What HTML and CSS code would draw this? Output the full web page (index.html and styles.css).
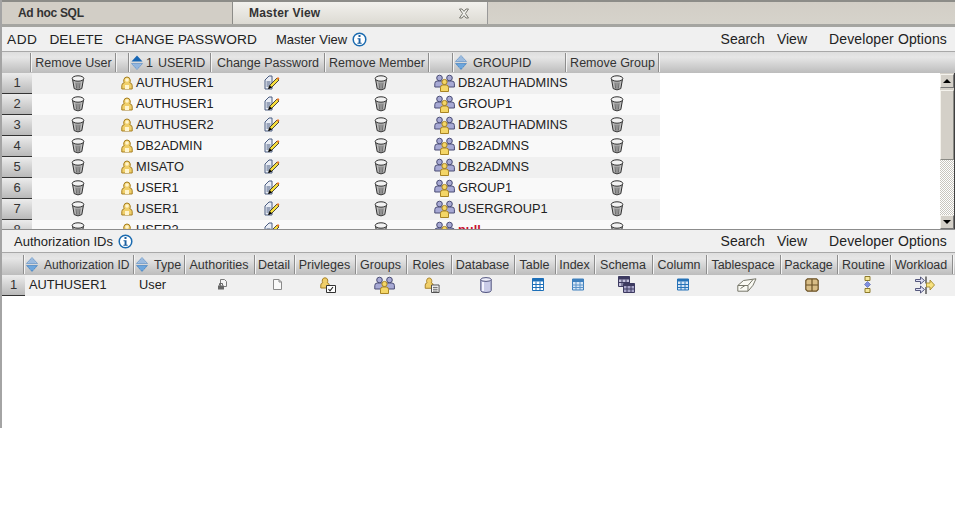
FILE: index.html
```html
<!DOCTYPE html>
<html lang="en">
<head>
<meta charset="utf-8">
<title>Master View</title>
<link rel="stylesheet" href="styles.css">
</head>
<body>
<svg class="sprite" aria-hidden="true">
  <symbol id="i-info" viewBox="0 0 15 15"><circle cx="7.5" cy="7.5" r="6.3" fill="#fff" stroke="#1b6bb0" stroke-width="1.5"/><rect x="6.5" y="3" width="2" height="2" fill="#1b5fa0"/><path d="M5.5 6.2h3v4.6h1.2v1H5.4v-1h1.2V7.2H5.5z" fill="#1b5fa0"/></symbol>
  <symbol id="i-sort" viewBox="0 0 12 15"><path d="M6 .5 11.500 6.500H.5z" fill="#b7cfea" stroke="#5e8fc4" stroke-width=".7"/><path d="M2.500 5h7M4 3h4" stroke="#5e8fc4" stroke-width=".6"/><path d="M6 14.500.5 8.500h11z" fill="#4f93d6" stroke="#3a78b8" stroke-width=".5"/><path d="M2.500 10h7M4 12h4" stroke="#b7d3ef" stroke-width=".6"/></symbol>
  <symbol id="i-sort-on" viewBox="0 0 12 15"><path d="M6 .5 11.500 6.500H.5z" fill="#1766b4"/><path d="M6 14.500.5 8.500h11z" fill="#a9c7ea" stroke="#5e8fc4" stroke-width=".7"/><path d="M2.500 10h7M4 12h4" stroke="#5e8fc4" stroke-width=".6"/></symbol>
  <symbol id="i-close" viewBox="0 0 12 11"><path d="M1.5 1H4L6 3.4 8 1h2.500L7.400 5.500l3.100 4.500H8L6 7.600 4 10H1.500l3.100-4.500z" fill="#f4f4f0" stroke="#77776f"/></symbol>
  <symbol id="i-trash" viewBox="0 0 14 16"><path d="M1.500 4 3.200 13.600Q7 16.200 10.800 13.600L12.500 4z" fill="#bdbdbd" stroke="#2e2e2e"/><ellipse cx="7" cy="3.500" rx="5.800" ry="2.700" fill="#f2f2f2" stroke="#2e2e2e"/><path d="M5 7.500l.5 6M9 7.500l-.5 6M7 7.500v7" stroke="#666"/></symbol>
  <symbol id="i-user" viewBox="0 0 12 14"><path d="M.8 13V9.500Q.8 7.200 3.200 6.800 2.500 5.600 2.800 3.800 3.300 1 6 1t3.200 2.800Q9.500 5.600 8.800 6.800 11.200 7.200 11.200 9.500V13z" fill="#f0cf6a" stroke="#a67f22"/><circle cx="6" cy="4" r="1.800" fill="#fff5cf"/><path d="M4 13V9h4v4z" fill="#fff5cf"/></symbol>
  <symbol id="i-edit" viewBox="0 0 16 15"><path d="M1 5 5 1h3v13H1z" fill="#e9edf5" stroke="#4a5c80"/><path d="M2.500 7H6.500M2.500 9H6.500M2.500 11H6.500" stroke="#4a5c80"/><path d="M4.500 13.500 6 10 13 3l2 2-7 7z" fill="#f7de3a" stroke="#222" stroke-width=".8"/><path d="M4.300 14 5.800 10.500 8 12.500z" fill="#000"/><path d="M12.500 3.500 14 2l1.500 1.500L14 5z" fill="#e8792a"/></symbol>
  <symbol id="i-group" viewBox="0 0 21 18"><g fill="#a7a9d4" stroke="#4a4d75"><circle cx="5.500" cy="4" r="2.800"/><path d="M.8 13V9.500q0-2.500 2.500-2.500h4.400q2.500 0 2.500 2.500V13z"/><circle cx="15.500" cy="4" r="2.800"/><path d="M11 13V9.500q0-2.500 2.500-2.500h4.400q2.500 0 2.500 2.500V13z"/></g><g fill="#f4d667" stroke="#a88425"><circle cx="10.500" cy="8" r="2.600"/><path d="M6.500 17.500v-4q0-2.500 2.300-2.500h3.400q2.300 0 2.300 2.500v4z"/></g></symbol>
  <symbol id="i-auth" viewBox="0 0 10 11"><path d="M3 .5h4l2 2v5H3z" fill="#f4f4f4" stroke="#7a7a7a"/><path d="M.5 6.500h6v4h-6z" fill="#666"/><path d="M2 6.500V4.500h3v2" fill="none" stroke="#666"/></symbol>
  <symbol id="i-doc" viewBox="0 0 10 11"><path d="M1 .5h5.500l2.500 2.500v7.500H1z" fill="#fafafa" stroke="#8a8a8a"/><path d="M6.500.5V3H9" fill="none" stroke="#8a8a8a"/></symbol>
  <symbol id="i-priv" viewBox="0 0 16 16"><path d="M.8 11V8q0-2 2-2.300Q2 4.500 2.300 3 2.800.8 5 .8T7.700 3q.3 1.500-.5 2.700 2 .3 2 2.300v3z" fill="#f0cf6a" stroke="#a67f22"/><path d="M6.500 8.500h9v7h-9z" fill="#fff" stroke="#333"/><path d="M8.500 12l1.500 1.800 3-3.800" fill="none" stroke="#222" stroke-width="1.100"/></symbol>
  <symbol id="i-role" viewBox="0 0 16 17"><path d="M.8 12V8.500q0-2 2-2.300Q2 5 2.300 3.500 2.800 1 5 1t2.700 2.500q.3 1.500-.5 2.700 2 .3 2 2.300V12z" fill="#f0cf6a" stroke="#a67f22"/><path d="M7.500 8.500h8v8h-8z" fill="#fff" stroke="#444"/><path d="M9 11h5M9 13h5M9 15h5" stroke="#555"/></symbol>
  <symbol id="i-db" viewBox="0 0 12 16"><path d="M.8 2.500v11Q.8 15.500 6 15.500t5.200-2v-11z" fill="#c9cbe8" stroke="#52557f"/><ellipse cx="6" cy="2.500" rx="5.200" ry="1.900" fill="#eeeefa" stroke="#52557f"/><path d="M3 5v9" stroke="#f4f4ff" stroke-width="2"/></symbol>
  <symbol id="i-table" viewBox="0 0 12 13"><path d="M.5.500h11v12H.5z" fill="#fff" stroke="#1c6fb8"/><path d="M.5.500h11v3H.5z" fill="#1c6fb8"/><path d="M4 3.500v9M8 3.500v9M.5 6.500h11M.5 9.500h11" stroke="#1c6fb8"/></symbol>
  <symbol id="i-index" viewBox="0 0 12 12"><path d="M.5.500h11v11H.5z" fill="#d6e6f6" stroke="#3f80bd"/><path d="M.5.500h11v3H.5z" fill="#3f80bd"/><path d="M4 3.500v8M8 3.500v8M.5 6.500h11M.5 9h11" stroke="#5c94c9"/></symbol>
  <symbol id="i-schema" viewBox="0 0 17 17"><path d="M.5.500h11v10H.5z" fill="#c4c2dc" stroke="#3d3a60"/><path d="M.5.500h11v3H.5z" fill="#3d3a60"/><path d="M4 3.500v7M8 3.500v7M.5 6.500h11" stroke="#3d3a60"/><path d="M5.500 7.500h11v9h-11z" fill="#a7a4c8" stroke="#3d3a60"/><path d="M5.500 7.500h11v2.500h-11z" fill="#3d3a60"/><path d="M9 10v6.500M13 10v6.500M5.500 13h11" stroke="#3d3a60"/></symbol>
  <symbol id="i-column" viewBox="0 0 12 12"><path d="M.5.500h11v11H.5z" fill="#d6e6f6" stroke="#2673b8"/><path d="M.5.500h11v2.500H.5z" fill="#2673b8"/><path d="M4 3v8.500M8 3v8.500M.5 6h11M.5 9h11" stroke="#2673b8"/></symbol>
  <symbol id="i-space" viewBox="0 0 20 14"><path d="M.8 7.500 6.500 2.500 19 .8l-3 6.500-5 5.900H.8z" fill="#fafaf4" stroke="#77776a"/><path d="M.8 7.500H11L16 1.500M11 7.500v5.700M3.500 10.500 8 7.500" fill="none" stroke="#77776a"/></symbol>
  <symbol id="i-package" viewBox="0 0 14 14"><path d="M.8 2.500 2.500.8h9l1.700 1.700v9l-1.700 1.700h-9L.8 11.500z" fill="#d8bd86" stroke="#6b5226" stroke-width="1.200"/><path d="M7 1v12M1 7h12" stroke="#6b5226" stroke-width="1.200"/></symbol>
  <symbol id="i-routine" viewBox="0 0 7 17"><path d="M1 .5h5v4H1zM1 12.500h5v4H1z" fill="#f5e79a" stroke="#8d7a2b"/><path d="M3.500 5.500 6.500 8.500 3.500 11.500.5 8.500z" fill="#7f8fe0" stroke="#4d5aa5" stroke-width=".6"/></symbol>
  <symbol id="i-work" viewBox="0 0 20 18"><path d="M.5 3.500h5V1l4 3.500-4 3.500V5.500h-5zM.5 12.500h5V10l4 3.500-4 3.500v-2.500h-5z" fill="#dfe0f5" stroke="#44476f" stroke-width=".9"/><path d="M11 .5v7M11 11v7" stroke="#333" stroke-width="1.200"/><path d="M11.500 7h3.500V4l4.500 5-4.500 5v-3h-3.500z" fill="#f7e27f" stroke="#a1882c" stroke-width=".9"/></symbol>
</svg>

<div class="app">
  <div class="tabs">
    <div class="tab">Ad hoc SQL</div>
    <div class="tab tab-active"><span>Master View</span><svg class="ic-close"><use href="#i-close"/></svg></div>
    <div class="tab-rest"></div>
  </div>

  <div class="toolbar toolbar-top">
    <span class="act">ADD</span>
    <span class="act">DELETE</span>
    <span class="act act-wide">CHANGE PASSWORD</span>
    <span class="title">Master View</span>
    <svg class="ic-info"><use href="#i-info"/></svg>
    <div class="tools">
      <span>Search</span><span>View</span><span class="dev">Developer Options</span>
    </div>
  </div>

  <div class="head head-top">
    <div class="hc hc-wide"></div>
    <div class="hc hc-wide">Remove User</div>
    <div class="hc hc-wide"></div>
    <div class="hc hc-sort"><svg class="ic-sort"><use href="#i-sort-on"/></svg><span class="rank">1</span><span>USERID</span></div>
    <div class="hc hc-wide">Change Password</div>
    <div class="hc hc-wide">Remove Member</div>
    <div class="hc hc-wide"></div>
    <div class="hc hc-sort"><svg class="ic-sort"><use href="#i-sort"/></svg><span class="lbl">GROUPID</span></div>
    <div class="hc hc-wide">Remove Group</div>
  </div>

  <div class="list">
    <div class="rows">
      <div class="row"><div class="num">1</div><div class="c-rm"><svg class="ic-trash"><use href="#i-trash"/></svg></div><div class="c-id"><svg class="ic-user"><use href="#i-user"/></svg>AUTHUSER1</div><div class="c-ic"><svg class="ic-edit"><use href="#i-edit"/></svg></div><div class="c-ic"><svg class="ic-trash"><use href="#i-trash"/></svg></div><div class="c-id c-group"><svg class="ic-group"><use href="#i-group"/></svg>DB2AUTHADMINS</div><div class="c-ic"><svg class="ic-trash"><use href="#i-trash"/></svg></div></div>
      <div class="row"><div class="num">2</div><div class="c-rm"><svg class="ic-trash"><use href="#i-trash"/></svg></div><div class="c-id"><svg class="ic-user"><use href="#i-user"/></svg>AUTHUSER1</div><div class="c-ic"><svg class="ic-edit"><use href="#i-edit"/></svg></div><div class="c-ic"><svg class="ic-trash"><use href="#i-trash"/></svg></div><div class="c-id c-group"><svg class="ic-group"><use href="#i-group"/></svg>GROUP1</div><div class="c-ic"><svg class="ic-trash"><use href="#i-trash"/></svg></div></div>
      <div class="row"><div class="num">3</div><div class="c-rm"><svg class="ic-trash"><use href="#i-trash"/></svg></div><div class="c-id"><svg class="ic-user"><use href="#i-user"/></svg>AUTHUSER2</div><div class="c-ic"><svg class="ic-edit"><use href="#i-edit"/></svg></div><div class="c-ic"><svg class="ic-trash"><use href="#i-trash"/></svg></div><div class="c-id c-group"><svg class="ic-group"><use href="#i-group"/></svg>DB2AUTHADMINS</div><div class="c-ic"><svg class="ic-trash"><use href="#i-trash"/></svg></div></div>
      <div class="row"><div class="num">4</div><div class="c-rm"><svg class="ic-trash"><use href="#i-trash"/></svg></div><div class="c-id"><svg class="ic-user"><use href="#i-user"/></svg>DB2ADMIN</div><div class="c-ic"><svg class="ic-edit"><use href="#i-edit"/></svg></div><div class="c-ic"><svg class="ic-trash"><use href="#i-trash"/></svg></div><div class="c-id c-group"><svg class="ic-group"><use href="#i-group"/></svg>DB2ADMNS</div><div class="c-ic"><svg class="ic-trash"><use href="#i-trash"/></svg></div></div>
      <div class="row"><div class="num">5</div><div class="c-rm"><svg class="ic-trash"><use href="#i-trash"/></svg></div><div class="c-id"><svg class="ic-user"><use href="#i-user"/></svg>MISATO</div><div class="c-ic"><svg class="ic-edit"><use href="#i-edit"/></svg></div><div class="c-ic"><svg class="ic-trash"><use href="#i-trash"/></svg></div><div class="c-id c-group"><svg class="ic-group"><use href="#i-group"/></svg>DB2ADMNS</div><div class="c-ic"><svg class="ic-trash"><use href="#i-trash"/></svg></div></div>
      <div class="row"><div class="num">6</div><div class="c-rm"><svg class="ic-trash"><use href="#i-trash"/></svg></div><div class="c-id"><svg class="ic-user"><use href="#i-user"/></svg>USER1</div><div class="c-ic"><svg class="ic-edit"><use href="#i-edit"/></svg></div><div class="c-ic"><svg class="ic-trash"><use href="#i-trash"/></svg></div><div class="c-id c-group"><svg class="ic-group"><use href="#i-group"/></svg>GROUP1</div><div class="c-ic"><svg class="ic-trash"><use href="#i-trash"/></svg></div></div>
      <div class="row"><div class="num">7</div><div class="c-rm"><svg class="ic-trash"><use href="#i-trash"/></svg></div><div class="c-id"><svg class="ic-user"><use href="#i-user"/></svg>USER1</div><div class="c-ic"><svg class="ic-edit"><use href="#i-edit"/></svg></div><div class="c-ic"><svg class="ic-trash"><use href="#i-trash"/></svg></div><div class="c-id c-group"><svg class="ic-group"><use href="#i-group"/></svg>USERGROUP1</div><div class="c-ic"><svg class="ic-trash"><use href="#i-trash"/></svg></div></div>
      <div class="row"><div class="num">8</div><div class="c-rm"><svg class="ic-trash"><use href="#i-trash"/></svg></div><div class="c-id"><svg class="ic-user"><use href="#i-user"/></svg>USER2</div><div class="c-ic"><svg class="ic-edit"><use href="#i-edit"/></svg></div><div class="c-ic"><svg class="ic-trash"><use href="#i-trash"/></svg></div><div class="c-id c-group"><svg class="ic-group"><use href="#i-group"/></svg><span class="null">null</span></div><div class="c-ic"><svg class="ic-trash"><use href="#i-trash"/></svg></div></div>
    </div>
    <div class="scroll">
      <div class="sb-btn"><span class="arrow-up"></span></div>
      <div class="sb-thumb"></div>
      <div class="sb-track"></div>
      <div class="sb-btn"><span class="arrow-down"></span></div>
    </div>
  </div>

  <div class="toolbar toolbar-bottom">
    <span class="title-b">Authorization IDs</span>
    <svg class="ic-info"><use href="#i-info"/></svg>
    <div class="tools">
      <span>Search</span><span>View</span><span class="dev">Developer Options</span>
    </div>
  </div>

  <div class="head head-bottom">
    <div class="hc"></div>
    <div class="hc hc-sort"><svg class="ic-sort"><use href="#i-sort"/></svg><span class="lbl lbl-tight">Authorization ID</span></div>
    <div class="hc hc-sort"><svg class="ic-sort"><use href="#i-sort"/></svg><span class="lbl">Type</span></div>
    <div class="hc">Authorities</div>
    <div class="hc">Detail</div>
    <div class="hc">Privleges</div>
    <div class="hc">Groups</div>
    <div class="hc">Roles</div>
    <div class="hc">Database</div>
    <div class="hc">Table</div>
    <div class="hc">Index</div>
    <div class="hc">Schema</div>
    <div class="hc">Column</div>
    <div class="hc">Tablespace</div>
    <div class="hc">Package</div>
    <div class="hc">Routine</div>
    <div class="hc">Workload</div>
  </div>

  <div class="row-b">
    <div class="num">1</div>
    <div class="c-text">AUTHUSER1</div>
    <div class="c-text c-type">User</div>
    <div class="c-b"><svg class="sz-11"><use href="#i-auth"/></svg></div>
    <div class="c-b"><svg class="sz-11"><use href="#i-doc"/></svg></div>
    <div class="c-b"><svg class="sz-16"><use href="#i-priv"/></svg></div>
    <div class="c-b"><svg class="sz-21"><use href="#i-group"/></svg></div>
    <div class="c-b"><svg class="sz-16"><use href="#i-role"/></svg></div>
    <div class="c-b"><svg class="sz-db"><use href="#i-db"/></svg></div>
    <div class="c-b"><svg class="sz-12"><use href="#i-table"/></svg></div>
    <div class="c-b"><svg class="sz-12"><use href="#i-index"/></svg></div>
    <div class="c-b"><svg class="sz-17"><use href="#i-schema"/></svg></div>
    <div class="c-b"><svg class="sz-12"><use href="#i-column"/></svg></div>
    <div class="c-b"><svg class="sz-20"><use href="#i-space"/></svg></div>
    <div class="c-b"><svg class="sz-14"><use href="#i-package"/></svg></div>
    <div class="c-b"><svg class="sz-7"><use href="#i-routine"/></svg></div>
    <div class="c-b"><svg class="sz-w"><use href="#i-work"/></svg></div>
  </div>
</div>
</body>
</html>
```
FILE: styles.css
```css
* { box-sizing: border-box; }
html, body { margin: 0; padding: 0; background: #fff; }
body { font-family: "Liberation Sans", Arial, sans-serif; color: #222; overflow: hidden; }
.sprite { display: none; }
svg { display: block; flex: none; }

.app { width: 955px; height: 428px; border-left: 2px solid #a4a4a4; overflow: hidden; }

.tabs { display: flex; height: 27px; background: #d4d0c8; border-top: 2px solid #8c8c88; border-bottom: 3px solid #a5a5a1; }
.tab { width: 231px; padding-left: 16px; display: flex; align-items: center; font-size: 12px; font-weight: bold; letter-spacing: -.3px; color: #333; background: #d2cec6; border-right: 1px solid #8c8c88; }
.tab-active { width: 255px; padding-left: 16px; letter-spacing: .2px; background: linear-gradient(#f2f1ed, #dcdad3); border-right: 1px solid #999; }
.ic-close { width: 12px; height: 11px; margin-left: 138px; }
.tab-rest { flex: 1; background: linear-gradient(#d2cec6, #d6d3cb); }

.toolbar { display: flex; align-items: center; background: #f0f0f0; font-size: 14px; color: #222; border-bottom: 1px solid #a8a8a8; }
.toolbar-top { height: 25px; padding-left: 5px; }
.toolbar-bottom { height: 24px; padding-left: 13px; border-top: 1px solid #8c8c8c; }
.act { margin-right: 12px; font-size: 13.700px; letter-spacing: .05px; }
.act:first-child { letter-spacing: .5px; }
.act-wide { margin-right: 19px; }
.title, .title-b { font-size: 13px; }
.title-b { margin-left: -1px; }
.ic-info { width: 15px; height: 15px; margin-left: 5px; }
.tools { margin-left: auto; display: flex; gap: 12px; padding-right: 8px; }
.dev { margin-left: 10px; letter-spacing: .12px; }

.head { display: grid; background: linear-gradient(#dedede, #e6e6e6 25%, #bcbcbc); font-size: 12.500px; color: #333; height: 21px; }
.head-top { grid-template-columns: 29px 85px 13px 82px 114px 104px 24px 113px 93px; }
.head-bottom { height: 22px; padding-top: 1px; grid-template-columns: 22px 110px 51px 70px 40px 61px 51px 45px 63px 41px 39px 58px 54px 74px 57px 53px 62px; }
.hc { display: flex; align-items: center; justify-content: center; white-space: nowrap; border-right: 1px solid #8d8d8d; margin: 1px 0; box-shadow: 1px 0 0 #f4f4f4; padding-right: 1px; }
.hc-wide { padding-right: 0; padding-left: 1px; }
.hc-sort { justify-content: flex-start; padding-left: 2px; padding-right: 0; }
.ic-sort { width: 12px; height: 15px; }
.rank { margin-left: 3px; }
.rank + span { margin-left: 5px; }
.lbl { margin-left: 6px; }
.lbl-tight { font-size: 12px; }

.list { display: flex; height: 156px; background: #fff; }
.rows { width: 658px; overflow: hidden; font-size: 12.800px; }
.row { display: grid; grid-template-columns: 30px 86px 94px 120px 98px 144px 86px; height: 21px; background: #f9f9f9; }
.row:nth-child(odd) { background: #f0f0f0; }
.row > *, .row-b > * { padding-bottom: 2px; }
.num { display: flex; align-items: center; justify-content: center; background: linear-gradient(#ececec, #b9b9b9); border-bottom: 1px solid #333; font-size: 13px; color: #333; }
.c-rm, .c-ic, .c-b { display: flex; align-items: center; justify-content: center; }
.c-rm { padding-left: 6px; }
.c-id { display: flex; align-items: center; padding-left: 3px; white-space: nowrap; }
.c-group { padding-left: 4px; }
.ic-trash { width: 14px; height: 16px; }
.ic-user { width: 12px; height: 14px; margin-right: 3px; }
.ic-edit { width: 16px; height: 15px; }
.ic-group { width: 21px; height: 18px; margin-right: 3px; }
.null { color: #c8102e; font-weight: bold; }

.scroll { margin-left: auto; width: 15px; display: flex; flex-direction: column; padding-top: 1px; background: #d4d0c8; border-right: 1px solid #404040; }
.sb-btn { height: 14px; display: flex; align-items: center; justify-content: center; background: #d4d0c8; border: 1px solid; border-color: #f4f2ec #777 #777 #f4f2ec; }
.arrow-up { border: 4px solid transparent; border-top: 0; border-bottom: 4px solid #000; }
.arrow-down { border: 4px solid transparent; border-bottom: 0; border-top: 4px solid #000; }
.sb-thumb { height: 70px; margin-top: 2px; background: #d4d0c8; border: 1px solid; border-color: #f4f2ec #8a8a84 #8a8a84 #f4f2ec; }
.sb-track { flex: 1; background: repeating-conic-gradient(#fff 0 25%, #c8c5bd 0 50%) 0 0 / 2px 2px; }

.row-b { display: grid; grid-template-columns: 23px 109px 51px 70px 40px 61px 51px 45px 63px 41px 39px 58px 54px 74px 57px 53px 62px; height: 21px; background: #f0f0f0; font-size: 12.800px; }
.c-text { display: flex; align-items: center; padding-left: 4px; white-space: nowrap; }
.c-type { padding-left: 5px; }
.c-b { padding-left: 5px; }
.sz-11 { width: 11px; height: 11px; }
.sz-12 { width: 12px; height: 13px; }
.sz-14 { width: 14px; height: 14px; }
.sz-16 { width: 16px; height: 16px; }
.sz-17 { width: 17px; height: 17px; }
.sz-20 { width: 20px; height: 14px; }
.sz-21 { width: 21px; height: 18px; }
.sz-db { width: 12px; height: 16px; }
.sz-7 { width: 7px; height: 17px; }
.sz-w { width: 20px; height: 18px; }
```
